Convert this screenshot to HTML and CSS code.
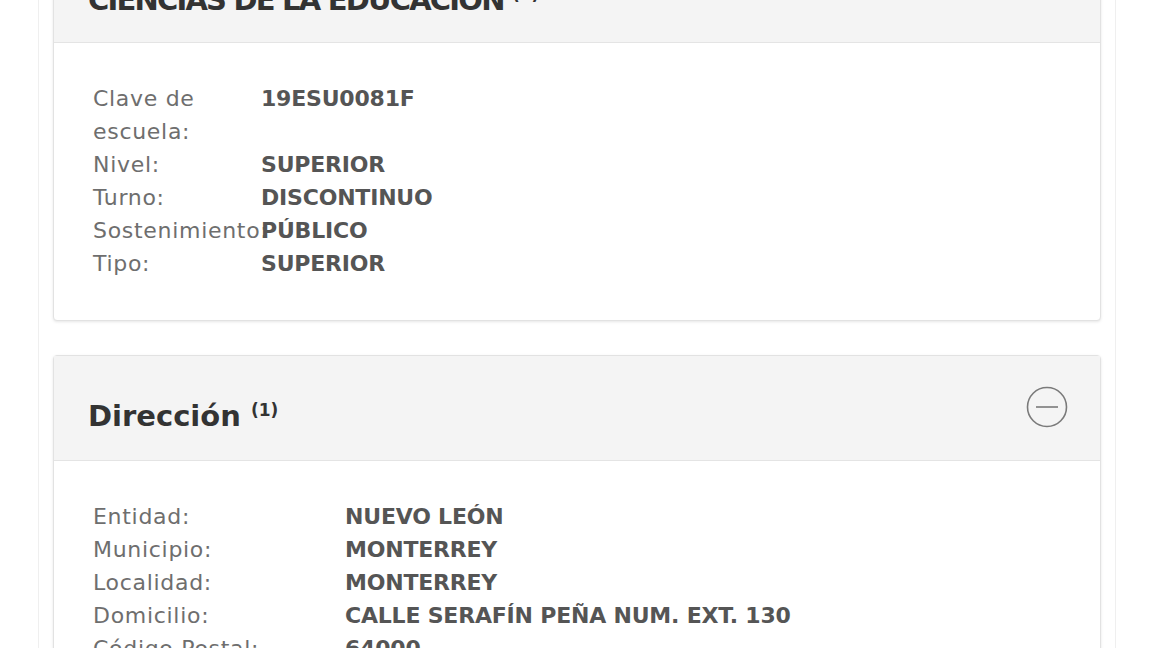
FILE: index.html
```html
<!DOCTYPE html>
<html lang="es">
<head>
  <meta charset="UTF-8">
  <meta name="viewport" content="width=device-width, initial-scale=1.0">
  <title>Escuela</title>
  <link rel="stylesheet" href="styles.css">
</head>
<body>
  <div class="page">
    <div class="card card-first">
      <div class="card-header">
        <h2 class="card-title">CIENCIAS DE LA EDUCACIÓN <sup>(1)</sup></h2>
      </div>
      <div class="card-body">
        <dl class="fields fields-narrow">
          <dt>Clave de escuela:</dt><dd>19ESU0081F</dd>
          <dt>Nivel:</dt><dd>SUPERIOR</dd>
          <dt>Turno:</dt><dd>DISCONTINUO</dd>
          <dt>Sostenimiento:</dt><dd>PÚBLICO</dd>
          <dt>Tipo:</dt><dd>SUPERIOR</dd>
        </dl>
      </div>
    </div>

    <div class="card">
      <div class="card-header">
        <h2 class="card-title">Dirección <sup>(1)</sup></h2>
        <button class="toggle" aria-label="Contraer">
          <svg width="42" height="42" viewBox="0 0 42 42">
            <circle cx="21" cy="21" r="19.5" fill="none" stroke="#7a7a7a" stroke-width="1.6"/>
            <line x1="10" y1="21" x2="32" y2="21" stroke="#7a7a7a" stroke-width="1.6"/>
          </svg>
        </button>
      </div>
      <div class="card-body">
        <dl class="fields fields-wide">
          <dt>Entidad:</dt><dd>NUEVO LEÓN</dd>
          <dt>Municipio:</dt><dd>MONTERREY</dd>
          <dt>Localidad:</dt><dd>MONTERREY</dd>
          <dt>Domicilio:</dt><dd>CALLE SERAFÍN PEÑA NUM. EXT. 130</dd>
          <dt>Código Postal:</dt><dd>64000</dd>
          <dt>Teléfono:</dt><dd>8183294000</dd>
        </dl>
      </div>
    </div>
  </div>
</body>
</html>
```

FILE: styles.css
```css
body {
  margin: 0;
  background: #fff;
  font-family: 'DejaVu Sans', sans-serif;
  overflow: hidden;
}

.page {
  margin: 0 36px 0 38px;
  padding: 0 14px;
  border-left: 1px solid #efefef;
  border-right: 1px solid #efefef;
  min-height: 100vh;
}

.card {
  border: 1px solid #e2e2e2;
  border-radius: 4px;
  box-shadow: 0 1px 3px rgba(0, 0, 0, 0.1);
  background: #fff;
  margin-bottom: 34px;
}

.card-first {
  margin-top: -63px;
}

.card-header {
  display: flex;
  justify-content: space-between;
  align-items: flex-start;
  background: #f4f4f4;
  border-bottom: 1px solid #e4e4e4;
  padding: 30px 32px 26px 34px;
}

.card-first .card-header {
  padding-bottom: 24px;
}

.card-title {
  margin: 13px 0 0;
  font-size: 29px;
  line-height: 35px;
  font-weight: bold;
  color: #333;
}

.card-first .card-title {
  margin-top: 15px;
  letter-spacing: -1.8px;
}

.card-title sup {
  font-size: 17px;
  letter-spacing: 0;
  vertical-align: 10px;
  line-height: 0;
}

.toggle {
  width: 42px;
  height: 42px;
  padding: 0;
  border: 0;
  background: none;
  cursor: pointer;
}

.toggle svg {
  display: block;
}

.card-body {
  padding: 39px 40px 40px 39px;
}

.fields {
  display: grid;
  margin: 0;
  font-size: 22px;
  line-height: 33px;
}

.fields-narrow {
  grid-template-columns: 168px 1fr;
}

.fields-wide {
  grid-template-columns: 252px 1fr;
}

.fields dt {
  color: #6e6e6e;
  letter-spacing: 0.7px;
}

.fields dd {
  margin: 0;
  color: #555;
  font-weight: bold;
  letter-spacing: -0.2px;
}
```
